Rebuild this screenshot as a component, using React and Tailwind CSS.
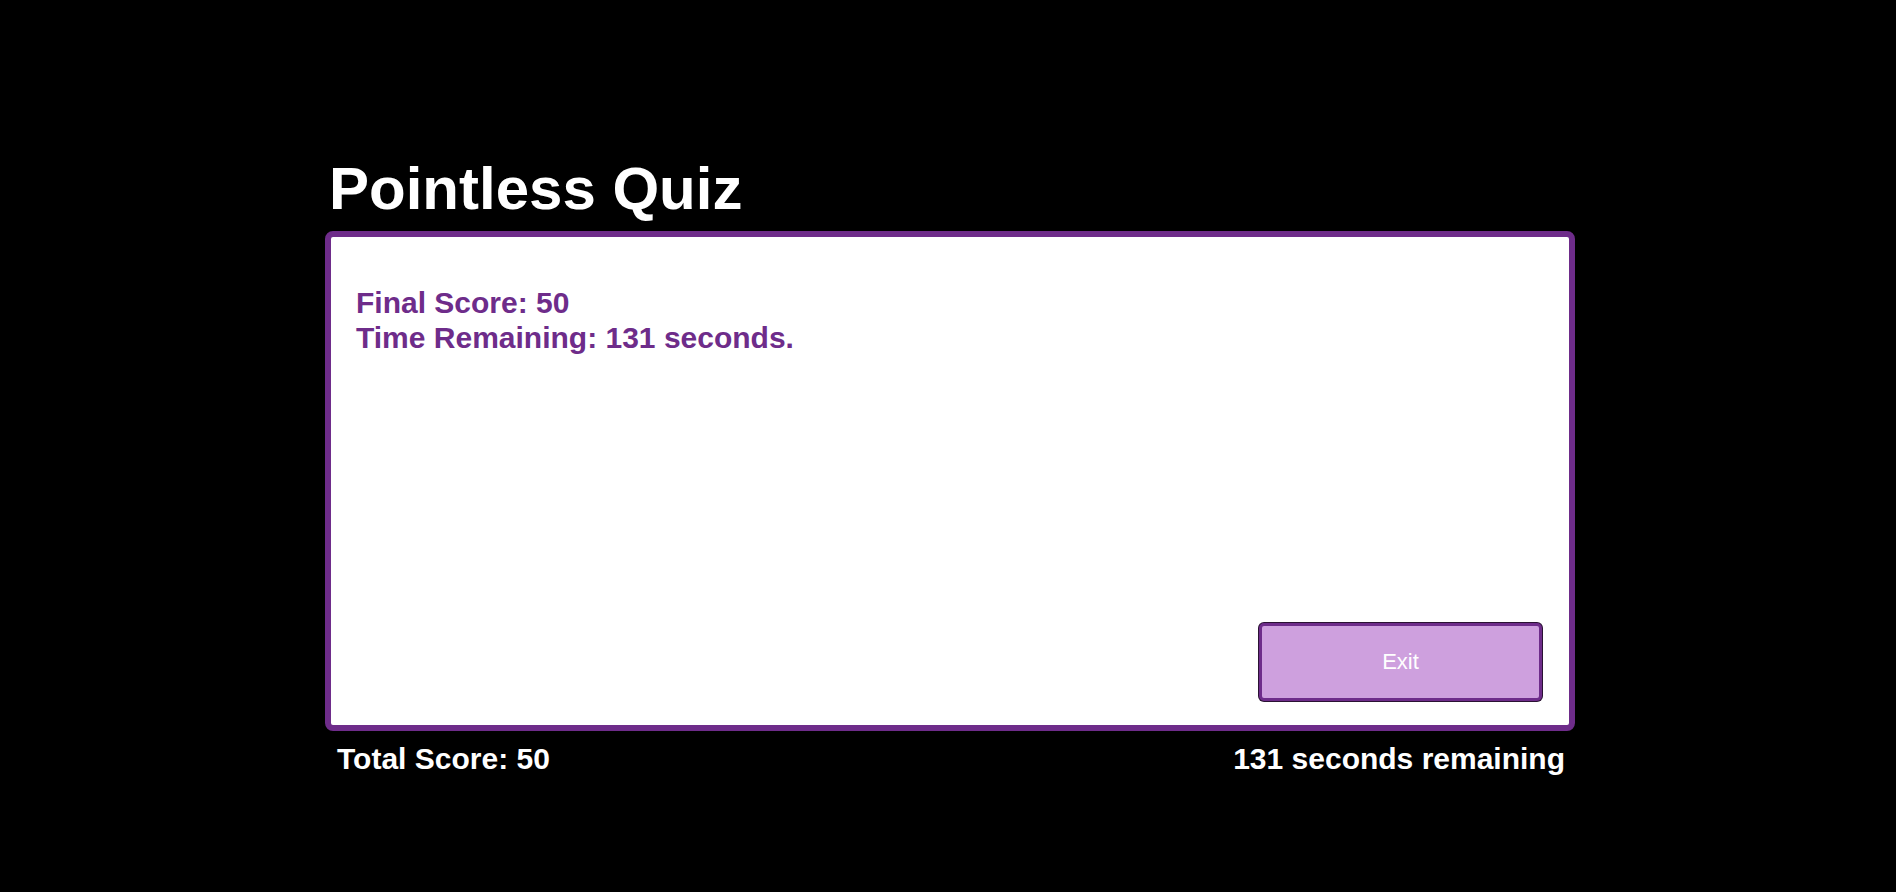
export default function App() {
  const score = 50;
  const secondsLeft = 131;

  return (
    <div className="min-h-screen w-full bg-black pt-[154px] font-['Liberation_Sans',Arial,sans-serif]">
      <div className="mx-auto w-[1254px] pl-[4px]">
        <h1 className="pl-[4px] text-[60px] font-bold leading-[1.15] text-white">Pointless Quiz</h1>

        <div className="mt-[8px] flex h-[500px] flex-col rounded-[8px] border-[6px] border-[#6e2c8a] bg-white px-[24px] pb-[24px] pt-[49px]">
          <div className="pl-[1px] text-[30px] font-bold leading-[1.16] text-[#6e2c8a]">
            <p>Final Score: {score}</p>
            <p>Time Remaining: {secondsLeft} seconds.</p>
          </div>

          <button
            type="button"
            className="mr-[3px] mt-auto h-[78px] w-[283px] self-end rounded-[5px] border-[3px] border-[#6e2c8a] bg-[#cea0de] pb-[2px] text-[22px] text-white shadow-[0_0_0_1px_#2a1233]"
          >
            Exit
          </button>
        </div>

        <div className="flex items-center justify-between pl-[12px] pr-[10px] pt-[11px] text-[30px] font-bold leading-[1.15] text-white">
          <span>Total Score: {score}</span>
          <span>{secondsLeft} seconds remaining</span>
        </div>
      </div>
    </div>
  );
}
